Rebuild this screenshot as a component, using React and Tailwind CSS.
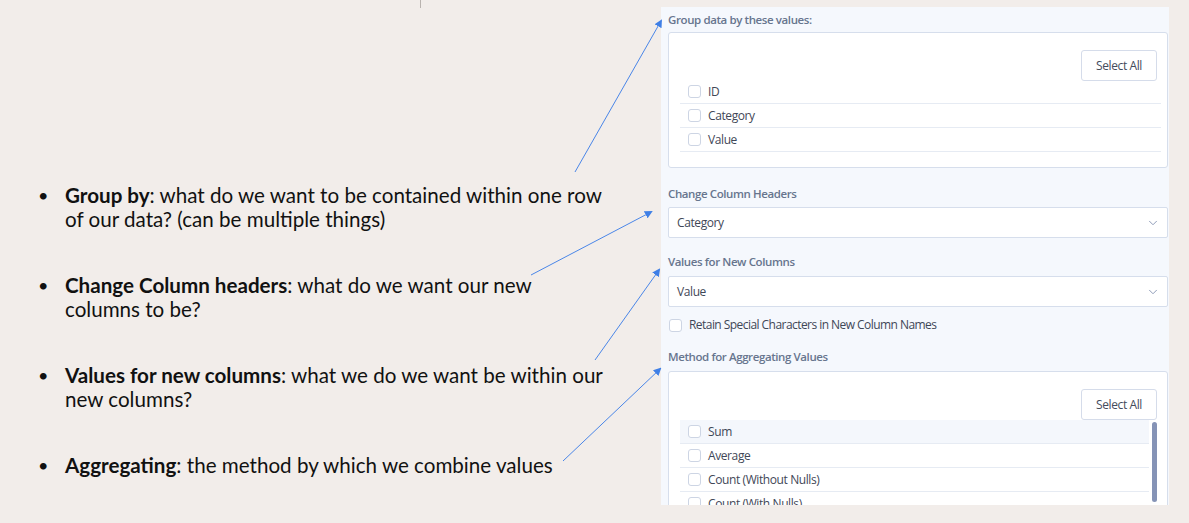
import React from 'react'
import { ChevronDown } from 'lucide-react'

const bullets = [
  { title: 'Group by', lines: [': what do we want to be contained within one row', 'of our data? (can be multiple things)'] },
  { title: 'Change Column headers', lines: [': what do we want our new', 'columns to be?'] },
  { title: 'Values for new columns', lines: [': what we do we want be within our', 'new columns?'] },
  { title: 'Aggregating', lines: [': the method by which we combine values'] },
]

const Checkbox = () => (
  <span className="w-[13px] h-[13px] shrink-0 rounded-[3px] border border-[#cdd5e4] bg-white" />
)

const CheckRow = ({ label, highlight }) => (
  <div
    className={`flex items-center gap-[7px] h-[24px] pl-[8px] border-b border-[#e6ebf3] ${
      highlight ? 'bg-[#f4f7fc]' : ''
    }`}
  >
    <Checkbox />
    <span className="text-[12px] text-[#3f4757]">{label}</span>
  </div>
)

const SelectAllButton = () => (
  <div className="flex justify-end pr-[10px]">
    <button className="w-[76px] h-[31px] rounded-[3px] border border-[#d5dcea] bg-white text-[12px] text-[#454c5c]">
      Select All
    </button>
  </div>
)

const FieldLabel = ({ children, className = '' }) => (
  <div className={`text-[11.5px] font-semibold leading-[16px] text-[#67758e] ${className}`}>{children}</div>
)

const SelectBox = ({ value }) => (
  <div className="flex items-center justify-between h-[31px] rounded-[2px] border border-[#d6deec] bg-white pl-[8px] pr-[7px]">
    <span className="text-[12px] text-[#3f4757]">{value}</span>
    <ChevronDown size={14} strokeWidth={1.6} className="text-[#8896b4]" />
  </div>
)

export default function App() {
  return (
    <div className="relative w-[1189px] h-[523px] overflow-hidden bg-[#f2edea] flex">
      {/* tiny divider at the top */}
      <div className="absolute left-[420px] top-0 w-px h-[8px] bg-[#b9b3af]" />

      {/* Bullet list */}
      <div className="w-[661px] shrink-0 pt-[183px] pl-[36px] font-['Lato',sans-serif] text-[20.6px] leading-[24px] text-[#111]">
        <ul className="flex flex-col gap-[42px]">
          {bullets.map((b) => (
            <li key={b.title} className="flex">
              <span className="w-[29px] shrink-0 pl-[2px] text-[18px]">•</span>
              <div>
                {b.lines.map((line, i) => (
                  <div key={i} className="whitespace-nowrap">
                    {i === 0 && <span className="font-bold">{b.title}</span>}
                    {line}
                  </div>
                ))}
              </div>
            </li>
          ))}
        </ul>
      </div>

      {/* Pivot settings panel */}
      <div className="mt-[7px] w-[508px] h-[498px] overflow-hidden bg-[#f5f8fd] pl-[7px] pr-[1px] pt-[5px] font-['Open_Sans',sans-serif] tracking-[-0.4px]">
        <FieldLabel className="mb-[4px]">Group data by these values:</FieldLabel>
        <div className="rounded-[3px] border border-[#d6deec] bg-white pt-[17px] pb-[15px]">
          <SelectAllButton />
          <div className="ml-[11px] mr-[6px] -mt-px">
            <CheckRow label="ID" />
            <CheckRow label="Category" />
            <CheckRow label="Value" />
          </div>
        </div>

        <FieldLabel className="mt-[18px] mb-[5px]">Change Column Headers</FieldLabel>
        <SelectBox value="Category" />

        <FieldLabel className="mt-[16px] mb-[6px]">Values for New Columns</FieldLabel>
        <SelectBox value="Value" />

        <div className="flex items-center gap-[7px] h-[16px] mt-[10px]">
          <span className="w-[13px] h-[13px] ml-[1px] rounded-[3px] border border-[#cdd5e4] bg-white" />
          <span className="text-[12px] tracking-[-0.55px] text-[#3f4757]">Retain Special Characters in New Column Names</span>
        </div>

        <FieldLabel className="mt-[16px] mb-[6px]">Method for Aggregating Values</FieldLabel>
        <div className="rounded-[3px] border border-[#d6deec] bg-white pt-[17px] h-[200px]">
          <SelectAllButton />
          <div className="flex ml-[11px] mr-[10px]">
            <div className="flex-1 mr-[3px]">
              <CheckRow label="Sum" highlight />
              <CheckRow label="Average" />
              <CheckRow label="Count (Without Nulls)" />
              <CheckRow label="Count (With Nulls)" />
            </div>
            <div className="w-[5px] h-[80px] mt-[2px] rounded-full bg-[#8593b6]" />
          </div>
        </div>
      </div>

      {/* Pointer arrows */}
      <svg className="absolute inset-0 pointer-events-none" width="1189" height="523">
        <defs>
          <marker id="ah" markerWidth="8" markerHeight="8" refX="6" refY="4" orient="auto" markerUnits="userSpaceOnUse">
            <path d="M0,0 L8,4 L0,8 Z" fill="#3f7fe6" />
          </marker>
        </defs>
        <g stroke="#4a86e8" strokeWidth="1" fill="none">
          <line x1="575" y1="172" x2="661" y2="21" markerEnd="url(#ah)" />
          <line x1="531" y1="275" x2="651" y2="212" markerEnd="url(#ah)" />
          <line x1="595" y1="360" x2="659" y2="270" markerEnd="url(#ah)" />
          <line x1="563" y1="461" x2="660" y2="369" markerEnd="url(#ah)" />
        </g>
      </svg>
    </div>
  )
}
